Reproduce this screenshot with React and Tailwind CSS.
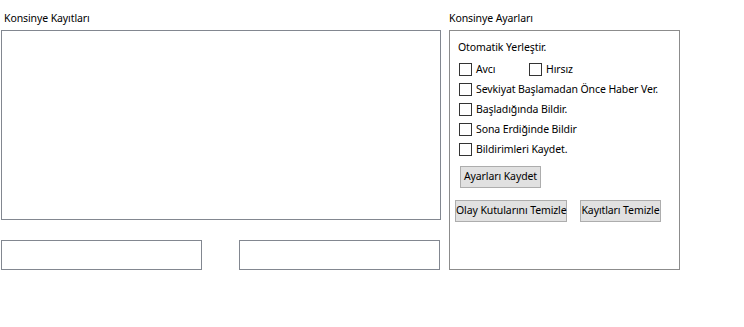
import { useState } from 'react'

function Check({ label, className = '' }) {
  const [on, setOn] = useState(false)
  return (
    <label className={`flex items-center h-[13px] cursor-default ${className}`} onClick={() => setOn(!on)}>
      <span className="w-[13px] h-[13px] border border-[#333333] bg-white flex items-center justify-center shrink-0">
        {on && <span className="text-[10px] leading-none">✓</span>}
      </span>
      <span className="ml-[4px] leading-none whitespace-nowrap">{label}</span>
    </label>
  )
}

function Btn({ children, className = '' }) {
  return (
    <button
      type="button"
      className={`h-[22px] px-0 border border-[#adadad] bg-[#e1e1e1] leading-none whitespace-nowrap text-center ${className}`}
    >
      {children}
    </button>
  )
}

export default function App() {
  return (
    <div
      className="w-[744px] h-[327px] bg-white text-black text-[10.5px] tracking-[-0.1px] flex"
      style={{ fontFamily: '"Noto Sans", "Open Sans", sans-serif' }}
    >
      <div className="ml-[1px] w-[440px] flex flex-col">
        <div className="h-[30px] pl-[3px] pt-[13px] leading-none">Konsinye Kayıtları</div>
        <textarea className="w-[440px] h-[190px] border border-[#828790] resize-none outline-none" />
        <div className="mt-[20px] flex">
          <input className="w-[201px] h-[30px] border border-[#828790] outline-none" />
          <input className="ml-[37px] w-[201px] h-[30px] border border-[#828790] outline-none" />
        </div>
      </div>
      <div className="ml-[8px] w-[231px] flex flex-col">
        <div className="h-[30px] pt-[13px] leading-none">Konsinye Ayarları</div>
        <div className="h-[240px] border border-[#8c8c8c] flex flex-col">
          <div className="pl-[8px] pt-[11px] leading-none">Otomatik Yerleştir.</div>
          <div className="mt-[10px] pl-[9px] flex flex-col gap-[7px]">
            <div className="flex">
              <Check label="Avcı" className="w-[70px]" />
              <Check label="Hırsız" />
            </div>
            <Check label="Sevkiyat Başlamadan Önce Haber Ver." />
            <Check label="Başladığında Bildir." />
            <Check label="Sona Erdiğinde Bildir" />
            <Check label="Bildirimleri Kaydet." />
          </div>
          <div className="mt-[10px] pl-[10px]">
            <Btn className="w-[81px]">Ayarları Kaydet</Btn>
          </div>
          <div className="mt-[12px] pl-[5px] flex">
            <Btn className="w-[112px]">Olay Kutularını Temizle</Btn>
            <Btn className="ml-[13px] w-[81px]">Kayıtları Temizle</Btn>
          </div>
        </div>
      </div>
    </div>
  )
}
